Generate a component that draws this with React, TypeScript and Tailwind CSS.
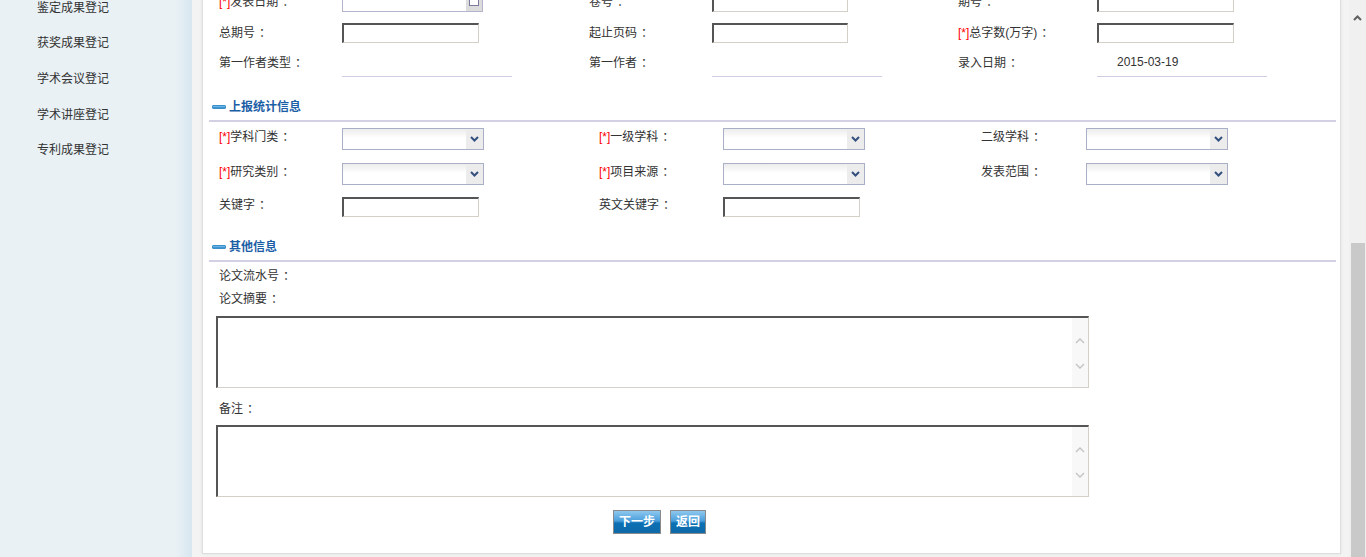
import React from "react";

const menu = ["鉴定成果登记", "获奖成果登记", "学术会议登记", "学术讲座登记", "专利成果登记"];

function Req() {
  return <span className="text-[#ff0000]">[*]</span>;
}

// label text followed by a full-width colon, nudged right like the original font draws it
function Label({ text, req = false, lift = false }: { text: string; req?: boolean; lift?: boolean }) {
  return (
    <div className={`whitespace-nowrap ${lift ? "pb-[4px]" : ""}`}>
      {req && <Req />}
      {text}
      <span className="ml-[4px]">：</span>
    </div>
  );
}

function Field({ wide = false }: { wide?: boolean }) {
  return (
    <div
      className={`${wide ? "w-[136px]" : "w-[137px]"} h-[20px] bg-white border-t-2 border-l-2 border-r border-b border-t-[#555] border-l-[#555] border-r-[#d4d0c8] border-b-[#d4d0c8]`}
    />
  );
}

function DateField() {
  return (
    <div className="w-[141px] h-[21px] flex bg-white border border-[#b3b3c9]">
      <div className="flex-1" />
      <div className="w-[16px] bg-[#dcdcdc] flex items-center justify-center">
        <svg width="10" height="9" viewBox="0 0 10 9">
          <rect x="0.5" y="0.5" width="9" height="8" fill="#fff" stroke="#7a7a9a" />
          <rect x="0.5" y="0.5" width="9" height="2" fill="#c04040" />
        </svg>
      </div>
    </div>
  );
}

function Select() {
  return (
    <div className="w-[142px] h-[22px] flex border border-[#a9afc6] bg-[linear-gradient(to_bottom,#ececec_0,#ffffff_45%,#ffffff_100%)]">
      <div className="flex-1" />
      <div className="w-[17px] bg-[#ececec] flex items-center justify-center">
        <svg width="9" height="6" viewBox="0 0 9 6">
          <path d="M1 1 L4.5 4.5 L8 1" fill="none" stroke="#34507f" strokeWidth="2" />
        </svg>
      </div>
    </div>
  );
}

function SectionTitle({ title }: { title: string }) {
  return (
    <div className="ml-[6px] mr-[4px] h-[26px] pb-[3px] flex items-center pl-[3px] border-b-2 border-[#d2d0e2]">
      <span className="w-[14px] h-[4px] rounded-[1px] bg-[linear-gradient(to_bottom,#7fc3ee,#2a88cc)] border border-[#3d8fc8] mr-[3px]" />
      <span className="text-[12px] font-bold text-[#1b5ea6]">{title}</span>
    </div>
  );
}

function TextBox() {
  return (
    <div className="ml-[13px] w-[873px] h-[72px] flex bg-white border-t-2 border-l-2 border-r border-b border-t-[#555] border-l-[#555] border-r-[#d4d0c8] border-b-[#d4d0c8]">
      <div className="flex-1" />
      <div className="w-[16px] bg-[#f8f8f8] flex flex-col items-center pt-[20px] gap-[19px]">
        <svg width="10" height="6" viewBox="0 0 10 6">
          <path d="M1 5 L5 1 L9 5" fill="none" stroke="#c6c6c6" strokeWidth="1.5" />
        </svg>
        <svg width="10" height="6" viewBox="0 0 10 6">
          <path d="M1 1 L5 5 L9 1" fill="none" stroke="#c6c6c6" strokeWidth="1.5" />
        </svg>
      </div>
    </div>
  );
}

function BlueButton({ label, w }: { label: string; w: string }) {
  return (
    <button
      className={`${w} h-[24px] flex items-center justify-center border border-[#8a8a8a] bg-[linear-gradient(to_bottom,#8ec8ef_0,#4a9edb_45%,#0b70b4_55%,#0f6aa8_100%)] text-white text-[12px] font-bold leading-none`}
    >
      {label}
    </button>
  );
}

export default function App() {
  return (
    <div className="w-[1366px] h-[557px] overflow-hidden flex bg-[#f2f2f2] text-[12px] text-[#333] font-['Liberation_Sans','Noto_Sans_CJK_SC',sans-serif]">
      {/* left menu */}
      <aside className="w-[192px] shrink-0 bg-[linear-gradient(to_right,#e9f1f5_0,#e9f1f5_176px,#d7e6f0_192px)] overflow-hidden">
        <ul className="-mt-[10px]">
          {menu.map((m) => (
            <li key={m} className="h-[35.6px] flex items-center pl-[37px]">
              {m}
            </li>
          ))}
        </ul>
      </aside>

      {/* main */}
      <div className="flex-1 flex flex-col pl-[10px] pr-[8px] pb-[3px] bg-[#f3f3f3]">
        <div className="flex-1 bg-white border-l border-r border-b border-[#dedede] shadow-[0_0_3px_rgba(0,0,0,0.08)] overflow-hidden">
          {/* basic info (scrolled) */}
          <div className="-mt-[14px] pl-[16px] grid grid-cols-[123px_247px_123px_246px_139px_1fr] grid-rows-[31px_31px_29px] items-center">
            <Label req text="发表日期" />
            <DateField />
            <Label text="卷号" />
            <Field wide />
            <Label text="期号" />
            <Field />

            <Label text="总期号" />
            <Field />
            <Label text="起止页码" />
            <Field wide />
            <Label req text="总字数(万字)" />
            <Field />

            <Label text="第一作者类型" />
            <div className="self-stretch w-[170px] border-b border-[#cfcde2]" />
            <Label text="第一作者" />
            <div className="self-stretch w-[170px] border-b border-[#cfcde2]" />
            <Label text="录入日期" />
            <div className="self-stretch w-[170px] border-b border-[#cfcde2] flex items-center pl-[20px]">2015-03-19</div>
          </div>

          <div className="mt-[19px]">
            <SectionTitle title="上报统计信息" />
          </div>

          <div className="pl-[16px] mb-[14px] grid grid-cols-[123px_257px_124px_258px_105px_1fr] grid-rows-[34px_35px_31px] items-center">
            <Label lift req text="学科门类" />
            <Select />
            <Label lift req text="一级学科" />
            <Select />
            <Label lift text="二级学科" />
            <Select />

            <Label lift req text="研究类别" />
            <Select />
            <Label lift req text="项目来源" />
            <Select />
            <Label lift text="发表范围" />
            <Select />

            <Label lift text="关键字" />
            <Field />
            <Label lift text="英文关键字" />
            <Field />
            <div />
            <div />
          </div>

          <SectionTitle title="其他信息" />

          <div className="pl-[16px] h-[28px] flex items-center">
            <Label text="论文流水号" />
          </div>
          <div className="pl-[16px] h-[18px] flex items-center">
            <Label text="论文摘要" />
          </div>
          <div className="mt-[8px]">
            <TextBox />
          </div>
          <div className="pl-[16px] mt-[12px] h-[18px] flex items-center">
            <Label text="备注" />
          </div>
          <div className="mt-[7px]">
            <TextBox />
          </div>

          <div className="mt-[13px] ml-[410px] flex gap-[9px]">
            <BlueButton label="下一步" w="w-[48px]" />
            <BlueButton label="返回" w="w-[36px]" />
          </div>
        </div>
      </div>

      {/* page scrollbar */}
      <div className="w-[17px] shrink-0 bg-[#f0f0f0] flex flex-col items-center">
        <div className="h-[36px] flex items-center">
          <svg width="9" height="6" viewBox="0 0 9 6">
            <path d="M1 5 L4.5 1.5 L8 5" fill="none" stroke="#606060" strokeWidth="2" />
          </svg>
        </div>
        <div className="flex-1" />
        <div className="w-[14px] h-[314px] bg-[#c9c9c9]" />
      </div>
    </div>
  );
}
